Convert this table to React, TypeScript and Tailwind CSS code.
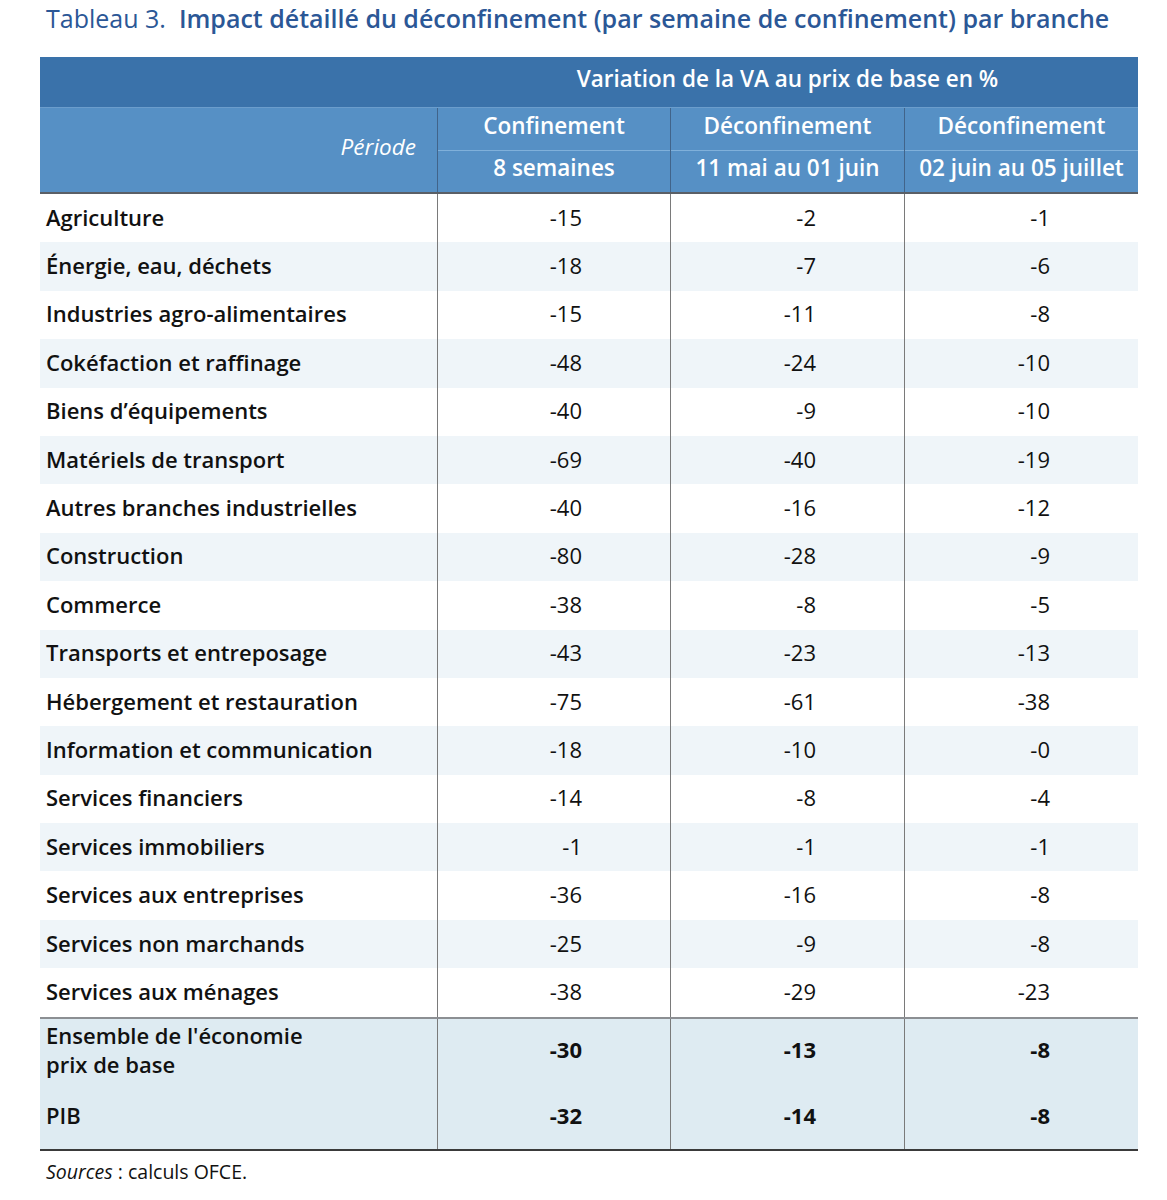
import React from "react";

const rows: [string, string, string, string][] = [
  ["Agriculture", "-15", "-2", "-1"],
  ["Énergie, eau, déchets", "-18", "-7", "-6"],
  ["Industries agro-alimentaires", "-15", "-11", "-8"],
  ["Cokéfaction et raffinage", "-48", "-24", "-10"],
  ["Biens d’équipements", "-40", "-9", "-10"],
  ["Matériels de transport", "-69", "-40", "-19"],
  ["Autres branches industrielles", "-40", "-16", "-12"],
  ["Construction", "-80", "-28", "-9"],
  ["Commerce", "-38", "-8", "-5"],
  ["Transports et entreposage", "-43", "-23", "-13"],
  ["Hébergement et restauration", "-75", "-61", "-38"],
  ["Information et communication", "-18", "-10", "-0"],
  ["Services financiers", "-14", "-8", "-4"],
  ["Services immobiliers", "-1", "-1", "-1"],
  ["Services aux entreprises", "-36", "-16", "-8"],
  ["Services non marchands", "-25", "-9", "-8"],
  ["Services aux ménages", "-38", "-29", "-23"],
];

const font = { fontFamily: '"Open Sans", "Noto Sans", sans-serif' };

export default function App() {
  return (
    <div className="w-[1167px] h-[1200px] bg-white text-[#111]" style={font}>
      <div className="pl-[46px] pt-[2px] h-[57px] text-[25px] leading-[32px] text-[#2b5796] whitespace-nowrap">
        <span className="font-normal">Tableau 3.</span>
        <span className="font-semibold ml-[13px]">
          Impact détaillé du déconfinement (par semaine de confinement) par branche
        </span>
      </div>

      <div className="ml-[40px] w-[1098px]">
        {/* header band 1 */}
        <div className="grid grid-cols-[397px_701px] h-[51px] bg-[#3a72aa] border-b border-[#6b9dcc]">
          <div />
          <div className="flex items-center justify-center pb-[6px] text-white font-semibold text-[22.5px]">
            Variation de la VA au prix de base en %
          </div>
        </div>
        {/* header band 2 */}
        <div className="grid grid-cols-[397px_233px_234px_234px] h-[86px] bg-[#5690c5] border-b-2 border-[#5a5f66] text-white text-[22.5px]">
          <div className="flex items-center justify-end pr-[21px] pb-[6px] italic">Période</div>
          {[
            ["Confinement", "8 semaines"],
            ["Déconfinement", "11 mai au 01 juin"],
            ["Déconfinement", "02 juin au 05 juillet"],
          ].map(([a, b], i) => (
            <div key={i} className="flex flex-col border-l border-[#41648a] font-semibold">
              <div className="h-[43px] flex items-center justify-center pb-[7px] border-b border-[#80b0da] whitespace-nowrap">
                {a}
              </div>
              <div className="flex-1 flex items-center justify-center pb-[7px] whitespace-nowrap">{b}</div>
            </div>
          ))}
        </div>

        {/* body */}
        {rows.map((r, i) => (
          <div
            key={i}
            className={`grid grid-cols-[397px_233px_234px_234px] h-[48.4px] text-[22px] ${
              i % 2 === 1 ? "bg-[#eff5f9]" : "bg-white"
            }`}
          >
            <div className="flex items-center pl-[6px] pb-[2px] font-semibold whitespace-nowrap">{r[0]}</div>
            {r.slice(1).map((v, j) => (
              <div key={j} className="flex items-center justify-end pr-[88px] pb-[2px] border-l border-[#7a7a7a]">
                {v}
              </div>
            ))}
          </div>
        ))}

        {/* summary */}
        <div className="border-t-2 border-[#8c8f93] bg-[#deebf2] border-b-2 border-b-[#3a3a3a] font-semibold text-[22px]">
          <div className="grid grid-cols-[397px_233px_234px_234px] h-[70px]">
            <div className="flex flex-col justify-center pl-[6px] pb-[8px] leading-[29px]">
              <span>Ensemble de l'économie</span>
              <span>prix de base</span>
            </div>
            {["-30", "-13", "-8"].map((v, j) => (
              <div key={j} className="flex items-center justify-end pr-[88px] pb-[8px] border-l border-[#7a7a7a] font-bold">
                {v}
              </div>
            ))}
          </div>
          <div className="grid grid-cols-[397px_233px_234px_234px] h-[60px]">
            <div className="flex items-center pl-[6px] pb-[6px]">PIB</div>
            {["-32", "-14", "-8"].map((v, j) => (
              <div key={j} className="flex items-center justify-end pr-[88px] pb-[6px] border-l border-[#7a7a7a] font-bold">
                {v}
              </div>
            ))}
          </div>
        </div>

        <div className="pl-[6px] pt-[7px] text-[19.5px] leading-[28px]">
          <span className="italic">Sources</span> : calculs OFCE.
        </div>
      </div>
    </div>
  );
}
